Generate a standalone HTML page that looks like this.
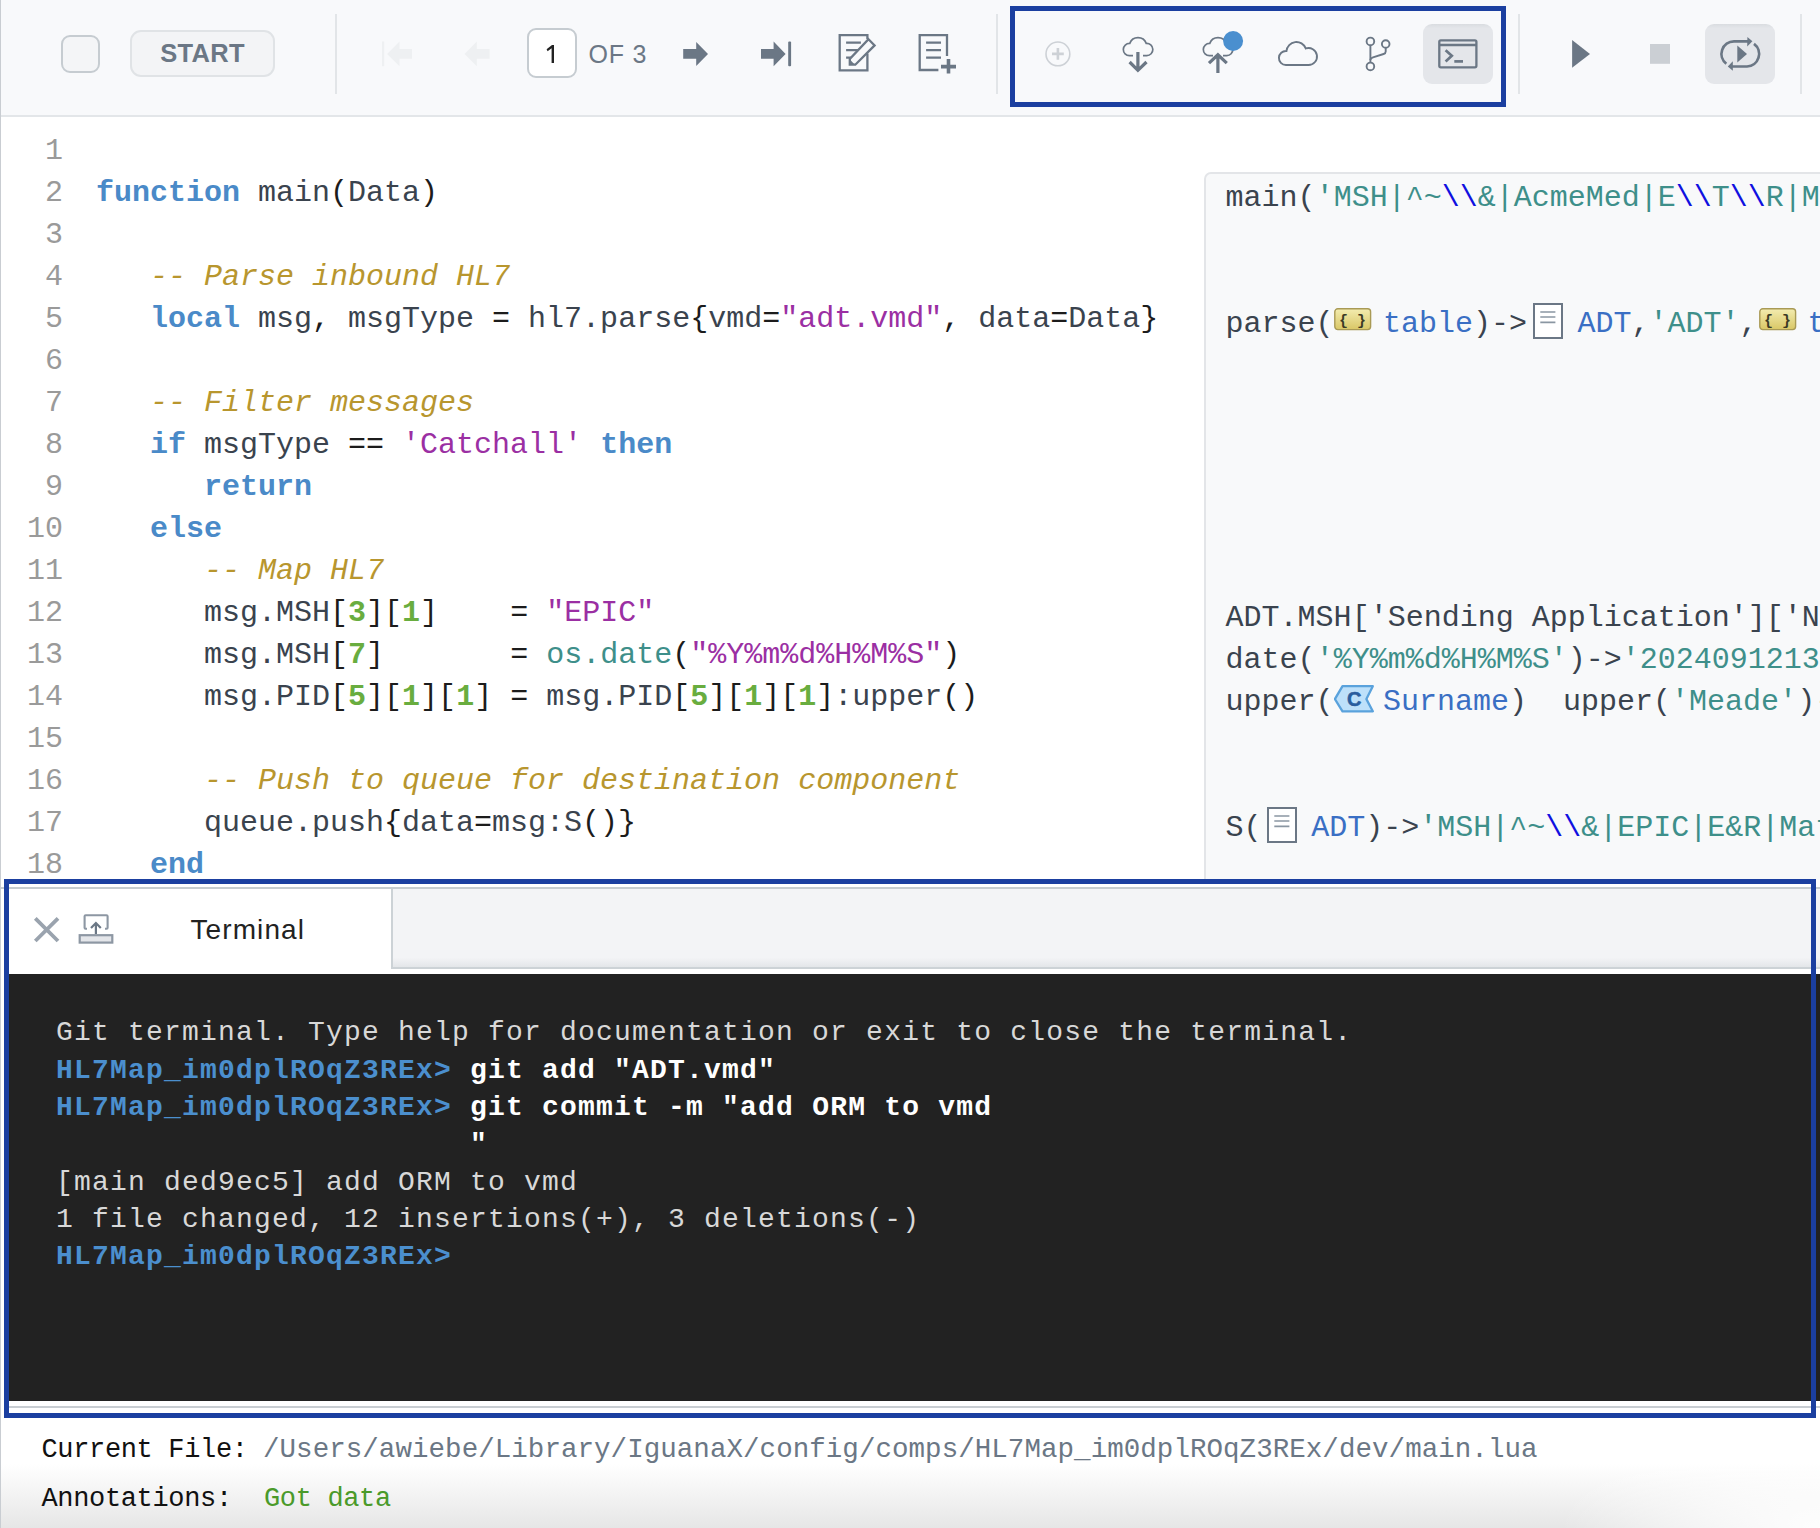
<!DOCTYPE html>
<html><head><meta charset="utf-8">
<style>
html,body{margin:0;padding:0}
body{width:1820px;height:1528px;overflow:hidden;position:relative;background:#fff;font-family:"Liberation Sans",sans-serif}
.abs{position:absolute}
#lb{left:0;top:0;width:1px;height:1528px;background:#c9cdd2;z-index:50}
#tb{left:0;top:0;width:1820px;height:115px;background:#f8f9fb;border-bottom:2px solid #e3e6e9}
.sep{position:absolute;top:14px;width:2px;height:80px;background:#e2e5e8}
.mono{font-family:"Liberation Mono",monospace}
/* code */
#code{left:0;top:129.6px;width:1200px}
.ln{position:absolute;left:0;width:63px;text-align:right;color:#9a9a9a;font-family:"Liberation Mono",monospace;font-size:30px;line-height:42px;white-space:pre}
.cl{position:absolute;left:96px;font-family:"Liberation Mono",monospace;font-size:30px;line-height:42px;white-space:pre;color:#3a434e}
.k{color:#4a8ac8;font-weight:bold}
.c{color:#b8962e;font-style:italic}
.s{color:#9b2fa3}
.n{color:#69ad3f;font-weight:bold}
.p{color:#1c1c1c}
.t{color:#3e8f8a}
/* annotation pane */
#ann{left:1204px;top:172px;width:640px;height:720px;background:#f8f9fa;border:2px solid #e3e5e8;border-radius:7px 0 0 0;box-sizing:border-box}
.al .p{color:inherit}
.al{position:absolute;left:1225.6px;font-family:"Liberation Mono",monospace;font-size:30px;line-height:42px;white-space:pre;color:#3a434e}
.as{color:#3e8f8a}
.ae{color:#1010e0}
.ab{color:#3a6fc4}
.ico{display:inline-block;vertical-align:top;position:relative;height:42px}
/* terminal */
#tov{left:4px;top:879px;width:1812px;height:539px;box-sizing:border-box;border:5px solid #1b3fa0;z-index:40}
#thead{left:9px;top:887px;width:1811px;height:87px;background:#fff;border-top:2px solid #c6ccd0;box-sizing:border-box}
#tgray{left:391px;top:889px;width:1429px;height:80px;background:linear-gradient(#f3f4f6 0,#f3f4f6 88%,#e3e6e9 100%);border-left:2px solid #ccd2d6;border-bottom:2px solid #ccd2d6;box-sizing:border-box}
#term{left:9px;top:974px;width:1811px;height:426.5px;background:#222}
.tl{position:absolute;left:56px;font-family:"Liberation Mono",monospace;font-size:28px;letter-spacing:1.2px;line-height:37.33px;white-space:pre;color:#d8d8d8}
.pr{color:#4b8fce;font-weight:bold}
.cm{color:#fff;font-weight:bold}
#tfoot{left:9px;top:1400.5px;width:1811px;height:13px;background:#fff}
#tfl{left:9px;top:1405.8px;width:1811px;height:2px;background:#c8cdd2}
/* status */
#stat{left:0;top:1418px;width:1820px;height:110px;background:radial-gradient(ellipse 260px 100px at 1820px 110px,rgba(255,255,255,0.95) 0,rgba(255,255,255,0.6) 45%,rgba(255,255,255,0) 100%),linear-gradient(#fff 0,#fff 42%,#e6e6e6 100%)}
.sl{position:absolute;font-family:"Liberation Mono",monospace;white-space:pre;line-height:40px}
</style></head>
<body>
<div id="lb" class="abs"></div>

<!-- TOOLBAR -->
<div id="tb" class="abs"></div>
<div class="sep" style="left:335px"></div>
<div class="sep" style="left:996px"></div>
<div class="sep" style="left:1518px"></div>
<div class="sep" style="left:1800px"></div>
<div class="abs" style="left:61px;top:35px;width:39px;height:38px;box-sizing:border-box;border:2px solid #c6ccd1;border-radius:9px;background:#f4f5f7"></div>
<div class="abs" style="left:130px;top:30px;width:145px;height:47px;box-sizing:border-box;border:2px solid #e0e3e6;border-radius:11px;background:#f3f4f6"></div>
<div class="abs" style="left:130px;top:30px;width:145px;height:47px;line-height:47px;text-align:center;font-weight:bold;font-size:25.5px;color:#6b7785;letter-spacing:0.3px">START</div>
<div class="abs" style="left:527px;top:28px;width:50px;height:50px;box-sizing:border-box;border:2px solid #c6ccd1;border-radius:9px;background:#fff"></div>
<svg class="abs" style="left:540px;top:40px" width="20" height="28" viewBox="540 40 20 28"><path d="M546.6,49.2 L552,45 H554 V63.1 H551.6 V48.2 L547.6,51.2 Z" fill="#222"/></svg>
<div class="abs" style="left:588.5px;top:29px;height:50px;line-height:50px;font-size:25px;color:#6b7785;letter-spacing:0.8px">OF 3</div>
<svg class="abs" style="left:0;top:0;z-index:5" width="1820" height="115" viewBox="0 0 1820 115">
 <!-- first / prev (disabled) -->
 <g fill="#eef0f2">
  <rect x="382" y="41.5" width="2.2" height="24.7"/>
  <path d="M387.1,53.9 L399.5,41.5 V49 H412 V58.7 H399.5 V66.2 Z"/>
  <path d="M464.5,53.9 L476.8,41.5 V49 H489.6 V58.7 H476.8 V66.2 Z"/>
 </g>
 <g fill="#6b7785">
  <path d="M683.2,49 H696.2 V42 L708,53.9 L696.2,65.9 V58.7 H683.2 Z"/>
  <path d="M761,49 H773.6 V41.5 L785.6,53.9 L773.6,66.2 V58.7 H761 Z"/>
  <rect x="788.2" y="41.5" width="2.9" height="24.7" rx="1"/>
 </g>
 <!-- edit doc -->
 <g fill="none" stroke="#6b7785" stroke-width="2.3">
  <path d="M867.4,39 V35.2 H839.7 V70.3 H867.4 V53.4"/>
  <path d="M846.1,42.7 H860.9 M846.1,50.2 H858 M846.1,57.6 H851"/>
  <path d="M868.5,39.2 L874.6,45.4 L855.3,64.7 L849.8,64.7 L849.8,59 Z"/>
 </g>
 <path d="M849.8,59.6 L855,64.7 L849.8,64.7 Z" fill="#6b7785"/>
 <!-- add doc -->
 <g fill="none" stroke="#6b7785" stroke-width="2.3">
  <path d="M947,56 V35.2 H919.7 V70 H938.4"/>
  <path d="M926.1,42.7 H941 M926.1,50.2 H941 M926.1,57.6 H941"/>
 </g>
 <g stroke="#6b7785" stroke-width="3.6"><path d="M941,66.6 H956 M948.5,59.1 V73.6"/></g>
 <!-- plus circle -->
 <circle cx="1057.9" cy="53.9" r="11.9" fill="none" stroke="#cdd1d6" stroke-width="1.6"/>
 <path d="M1052,53.9 H1063.8 M1057.9,48 V59.8" stroke="#cdd1d6" stroke-width="2.6"/>
 <!-- cloud download -->
 <g fill="none" stroke="#6b7785" stroke-width="1.7">
  <path d="M1133,55.6 H1129.5 A6.1,6.1 0 1 1 1129.76,43.41 A8.8,8.8 0 0 1 1146.24,43.42 A6.1,6.1 0 1 1 1146.7,55.6 H1143"/>
  <path d="M1213,55.6 H1209.5 A6.1,6.1 0 1 1 1209.76,43.41 A8.8,8.8 0 0 1 1226.24,43.42 A6.1,6.1 0 1 1 1226.7,55.6 H1223"/>
 </g>
 <g fill="none" stroke="#6b7785" stroke-width="3.2">
  <path d="M1137.9,52 V69.5 M1129.6,62 L1137.9,70.3 L1146.5,62"/>
  <path d="M1217.9,56 V73 M1209,63.2 L1217.9,54.8 L1226.8,63.2"/>
 </g>
 <circle cx="1233.1" cy="41" r="10" fill="#4a8fcf"/>
 <!-- cloud -->
 <path d="M1285.9,65.0 A7.0,7.0 0 1 1 1286.45,51.02 A10.0,10.0 0 0 1 1305.75,48.46 A8.5,8.5 0 1 1 1308.5,65.0 Z" fill="none" stroke="#6b7785" stroke-width="1.9"/>
 <!-- git branch -->
 <g fill="none" stroke="#6b7785" stroke-width="1.9">
  <circle cx="1370.4" cy="41.4" r="3.8"/>
  <circle cx="1385.7" cy="44" r="3.8"/>
  <circle cx="1370.4" cy="66.4" r="3.8"/>
  <path d="M1370.4,45.2 V62.6"/>
  <path d="M1385.7,47.8 V51.5 Q1385.7,53.3 1383.6,54 L1373,57.3 Q1370.4,58.2 1370.4,60"/>
 </g>
 <!-- terminal button -->
 <defs><linearGradient id="btng" x1="0" y1="0" x2="0" y2="1"><stop offset="0" stop-color="#d9dce0"/><stop offset="0.07" stop-color="#e4e6ea"/><stop offset="1" stop-color="#e4e6ea"/></linearGradient></defs><rect x="1423" y="24" width="70" height="60" rx="9" fill="url(#btng)"/>
 <g fill="none" stroke="#6b7785" stroke-width="2.3">
  <rect x="1439.3" y="40.3" width="37.1" height="27" rx="1.5"/>
  <path d="M1439.3,45 H1476.4"/>
 </g>
 <g fill="none" stroke="#6b7785" stroke-width="2.7">
  <path d="M1445.6,50.2 L1451.8,55.8 L1445.6,61.5"/>
  <path d="M1454.3,61.4 H1463"/>
 </g>
 <!-- blue highlight -->
 <rect x="1012.5" y="8.5" width="491" height="96" fill="none" stroke="#1b3fa0" stroke-width="5"/>
 <!-- play / stop -->
 <path d="M1572.1,40.1 L1590,53.9 L1572.1,67.7 Z" fill="#6b7785"/>
 <rect x="1650" y="44" width="20" height="19.8" fill="#cbcfd4"/>
 <!-- autorun -->
 <rect x="1705" y="24" width="70" height="60" rx="9" fill="url(#btng)"/>
 <g fill="none" stroke="#6b7785" stroke-width="2.7">
  <path d="M1748,41.3 H1734 A12.6,12.6 0 0 0 1726.3,63.8"/>
  <path d="M1732,66.5 H1747 A12.6,12.6 0 0 0 1754,43.8"/>
 </g>
 <g fill="#6b7785">
  <path d="M1747.4,36.9 L1752.4,41.3 L1747.2,46.5 Z"/>
  <path d="M1732.8,61.3 L1727.8,66.5 L1732.8,70.8 Z"/>
  <path d="M1737.3,45.4 L1747,53.9 L1737.3,62.4 Z"/>
 </g>
</svg>

<!-- CODE -->
<div id="code" class="abs">
<div class="ln" style="top:0">1</div>
<div class="ln" style="top:42px">2</div>
<div class="ln" style="top:84px">3</div>
<div class="ln" style="top:126px">4</div>
<div class="ln" style="top:168px">5</div>
<div class="ln" style="top:210px">6</div>
<div class="ln" style="top:252px">7</div>
<div class="ln" style="top:294px">8</div>
<div class="ln" style="top:336px">9</div>
<div class="ln" style="top:378px">10</div>
<div class="ln" style="top:420px">11</div>
<div class="ln" style="top:462px">12</div>
<div class="ln" style="top:504px">13</div>
<div class="ln" style="top:546px">14</div>
<div class="ln" style="top:588px">15</div>
<div class="ln" style="top:630px">16</div>
<div class="ln" style="top:672px">17</div>
<div class="ln" style="top:714px">18</div>
<div class="cl" style="top:42px"><span class="k">function</span> main<span class="p">(</span>Data<span class="p">)</span></div>
<div class="cl" style="top:126px">   <span class="c">-- Parse inbound HL7</span></div>
<div class="cl" style="top:168px">   <span class="k">local</span> msg<span class="p">,</span> msgType <span class="p">=</span> hl7.parse<span class="p">{</span>vmd<span class="p">=</span><span class="s">"adt.vmd"</span><span class="p">,</span> data<span class="p">=</span>Data<span class="p">}</span></div>
<div class="cl" style="top:252px">   <span class="c">-- Filter messages</span></div>
<div class="cl" style="top:294px">   <span class="k">if</span> msgType <span class="p">==</span> <span class="s">'Catchall'</span> <span class="k">then</span></div>
<div class="cl" style="top:336px">      <span class="k">return</span></div>
<div class="cl" style="top:378px">   <span class="k">else</span></div>
<div class="cl" style="top:420px">      <span class="c">-- Map HL7</span></div>
<div class="cl" style="top:462px">      msg.MSH<span class="p">[</span><span class="n">3</span><span class="p">][</span><span class="n">1</span><span class="p">]</span>    <span class="p">=</span> <span class="s">"EPIC"</span></div>
<div class="cl" style="top:504px">      msg.MSH<span class="p">[</span><span class="n">7</span><span class="p">]</span>       <span class="p">=</span> <span class="t">os.date</span><span class="p">(</span><span class="s">"%Y%m%d%H%M%S"</span><span class="p">)</span></div>
<div class="cl" style="top:546px">      msg.PID<span class="p">[</span><span class="n">5</span><span class="p">][</span><span class="n">1</span><span class="p">][</span><span class="n">1</span><span class="p">]</span> <span class="p">=</span> msg.PID<span class="p">[</span><span class="n">5</span><span class="p">][</span><span class="n">1</span><span class="p">][</span><span class="n">1</span><span class="p">]</span>:upper<span class="p">()</span></div>
<div class="cl" style="top:630px">      <span class="c">-- Push to queue for destination component</span></div>
<div class="cl" style="top:672px">      queue.push<span class="p">{</span>data<span class="p">=</span>msg:S<span class="p">()}</span></div>
<div class="cl" style="top:714px">   <span class="k">end</span></div>
</div>

<!-- ANNOTATIONS -->
<div id="ann" class="abs"></div>
<div class="abs" style="left:0;top:135px;width:1820px;height:745px;overflow:hidden">
<div class="al" style="top:42px">main<span class="p">(</span><span class="as">'MSH|^~<span class="ae">\\</span>&amp;|AcmeMed|E<span class="ae">\\</span>T<span class="ae">\\</span>R|MMMMMMMMMM</span></div>
<div class="al" style="top:168px">parse<span class="p">(</span><span class="ico" style="width:37.3px;margin-left:0.6px;margin-right:11.5px"><svg class="abs" style="left:0;top:5px" width="38" height="23" viewBox="0 0 38 23"><defs><linearGradient id="yg" x1="0" y1="0" x2="0" y2="1"><stop offset="0" stop-color="#f3ecb0"/><stop offset="1" stop-color="#d9c766"/></linearGradient></defs><rect x="0.8" y="0.8" width="35.8" height="20.8" rx="3" fill="url(#yg)" stroke="#a99a55" stroke-width="1.4"/><text x="18.6" y="16.5" text-anchor="middle" font-family="Liberation Mono" font-weight="bold" font-size="15" fill="#3b3a25">{ }</text></svg></span><span class="ab">table</span>)-&gt;<span class="ico" style="width:30px;margin-left:5.5px;margin-right:15px"><svg class="abs" style="left:0;top:-0.5px" width="30" height="36" viewBox="0 0 30 36"><rect x="1" y="1" width="28" height="34" fill="#fff" stroke="#6b7785" stroke-width="2"/><path d="M7.3,9 H22.4 M7.3,14 H22.4 M7.3,19.4 H22.4" stroke="#8a96a2" stroke-width="1.6"/></svg></span><span class="ab">ADT</span>,<span class="as">'ADT'</span>,<span class="ico" style="width:37.3px;margin-left:1px;margin-right:11.5px"><svg class="abs" style="left:0;top:5px" width="38" height="23" viewBox="0 0 38 23"><rect x="0.8" y="0.8" width="35.8" height="20.8" rx="3" fill="url(#yg)" stroke="#a99a55" stroke-width="1.4"/><text x="18.6" y="16.5" text-anchor="middle" font-family="Liberation Mono" font-weight="bold" font-size="15" fill="#3b3a25">{ }</text></svg></span><span class="ab">table</span></div>
<div class="al" style="top:462px">ADT.MSH<span class="p">[</span>'Sending Application'<span class="p">][</span>'NameSpaceId'<span class="p">]</span></div>
<div class="al" style="top:504px">date<span class="p">(</span><span class="as">'%Y%m%d%H%M%S'</span><span class="p">)</span>-&gt;<span class="as">'20240912130000'</span></div>
<div class="al" style="top:546px">upper<span class="p">(</span><span class="ico" style="width:39.6px;margin-left:0.7px;margin-right:9.1px"><svg class="abs" style="left:0;top:3px" width="41" height="31" viewBox="0 0 41 31"><path d="M8.5,2.2 H38.8 L32.4,15.1 L38.8,27.3 H8.5 L0.9,15.1 Z" fill="#bde0fa" stroke="#5aa2dc" stroke-width="2.3" stroke-linejoin="round"/><text x="20.3" y="21.7" text-anchor="middle" font-family="Liberation Sans" font-weight="bold" font-size="20" fill="#2a5d9e" stroke="#2a5d9e" stroke-width="0.5">C</text></svg></span><span class="ab">Surname</span><span class="p">)</span>  upper<span class="p">(</span><span class="as">'Meade'</span><span class="p">)</span>-&gt;<span class="as">'MEADE'</span></div>
<div class="al" style="top:672px">S<span class="p">(</span><span class="ico" style="width:30px;margin-left:5.5px;margin-right:14px"><svg class="abs" style="left:0;top:-0.5px" width="30" height="36" viewBox="0 0 30 36"><rect x="1" y="1" width="28" height="34" fill="#fff" stroke="#6b7785" stroke-width="2"/><path d="M7.3,9 H22.4 M7.3,14 H22.4 M7.3,19.4 H22.4" stroke="#8a96a2" stroke-width="1.6"/></svg></span><span class="ab">ADT</span><span class="p">)</span>-&gt;<span class="as">'MSH|^~<span class="ae">\\</span>&amp;|EPIC|E&amp;R|Mat</span></div>
</div>

<!-- TERMINAL -->
<div class="abs" style="left:0;top:880px;width:1820px;height:540px;background:#fff"></div>
<div id="thead" class="abs"></div>
<div class="abs" style="left:0;top:887px;width:1820px;height:2px;background:#c6ccd0"></div>
<div id="tgray" class="abs"></div>
<svg class="abs" style="left:0;top:880px;z-index:6" width="140" height="80" viewBox="0 880 140 80">
 <path d="M35.3,918.3 L58,941 M58,918.3 L35.3,941" stroke="#9aa3ae" stroke-width="3.8"/>
 <path d="M87,928.7 H85.5 Q84.6,928.7 84.6,927.7 V916.3 Q84.6,915.2 85.7,915.2 H106.5 Q107.6,915.2 107.6,916.3 V927.7 Q107.6,928.7 106.6,928.7 H105" fill="none" stroke="#8d97a3" stroke-width="2.1"/>
 <rect x="79.7" y="935.2" width="32.6" height="7.4" fill="#e4e6ea" stroke="#8d97a3" stroke-width="2.2"/>
 <path d="M95.9,934 V923.5 M91,928 L95.9,923 L100.8,928" fill="none" stroke="#6b7785" stroke-width="2.2"/>
</svg>
<div class="abs" style="left:190.5px;top:909.5px;font-size:28px;line-height:40px;color:#222;letter-spacing:1.1px">Terminal</div>
<div id="term" class="abs"></div>
<div class="tl" style="top:1014.2px">Git terminal. Type help for documentation or exit to close the terminal.</div>
<div class="tl" style="top:1051.5px"><span class="pr">HL7Map_im0dplROqZ3REx&gt;</span> <span class="cm">git add "ADT.vmd"</span></div>
<div class="tl" style="top:1088.9px"><span class="pr">HL7Map_im0dplROqZ3REx&gt;</span> <span class="cm">git commit -m "add ORM to vmd</span></div>
<div class="tl" style="top:1126.2px">                       <span class="cm">"</span></div>
<div class="tl" style="top:1163.5px">[main ded9ec5] add ORM to vmd</div>
<div class="tl" style="top:1200.9px">1 file changed, 12 insertions(+), 3 deletions(-)</div>
<div class="tl" style="top:1238.2px"><span class="pr">HL7Map_im0dplROqZ3REx&gt;</span></div>
<div id="tfoot" class="abs"></div>
<div id="tfl" class="abs"></div>
<div id="tov" class="abs"></div>

<!-- STATUS -->
<div id="stat" class="abs"></div>
<div class="sl" style="left:41.5px;top:1429.5px;font-size:27px;letter-spacing:-0.35px;color:#111">Current File:</div>
<div class="sl" style="left:263px;top:1429.5px;font-size:27.5px;letter-spacing:0.05px;color:#6b7785">/Users/awiebe/Library/IguanaX/config/comps/HL7Map_im0dplROqZ3REx/dev/main.lua</div>
<div class="sl" style="left:41.5px;top:1478.7px;font-size:27px;letter-spacing:-0.35px;color:#111">Annotations:</div>
<div class="sl" style="left:264px;top:1478.7px;font-size:27px;letter-spacing:-0.35px;color:#4a9a2a">Got data</div>

</body></html>
